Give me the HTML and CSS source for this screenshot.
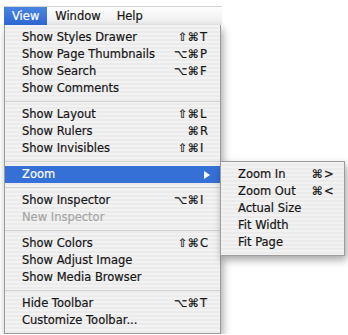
FILE: index.html
```html
<!DOCTYPE html>
<html lang="en">
<head>
    <meta charset="UTF-8">
    <title>View Menu</title>
    <link rel="stylesheet" href="styles.css">
</head>
<body>

    <div class="screen">
        <!-- Menu bar -->
        <div class="menubar">
            <span class="menubar-item is-open">View</span>
            <span class="menubar-item">Window</span>
            <span class="menubar-item">Help</span>
        </div>

        <!-- View dropdown -->
        <ul class="menu">
            <li class="menu-item"><span class="label">Show Styles Drawer</span><span class="mods">⇧⌘</span><span class="key">T</span></li>
            <li class="menu-item"><span class="label">Show Page Thumbnails</span><span class="mods">⌥⌘</span><span class="key">P</span></li>
            <li class="menu-item"><span class="label">Show Search</span><span class="mods">⌥⌘</span><span class="key">F</span></li>
            <li class="menu-item"><span class="label">Show Comments</span></li>
            <li class="separator"></li>
            <li class="menu-item"><span class="label">Show Layout</span><span class="mods">⇧⌘</span><span class="key">L</span></li>
            <li class="menu-item"><span class="label">Show Rulers</span><span class="mods">⌘</span><span class="key">R</span></li>
            <li class="menu-item"><span class="label">Show Invisibles</span><span class="mods">⇧⌘</span><span class="key">I</span></li>
            <li class="separator"></li>
            <li class="menu-item is-active">
                <span class="label">Zoom</span><span class="key"><span class="arrow"></span></span>

                <!-- Zoom submenu -->
                <ul class="menu submenu">
                    <li class="menu-item"><span class="label">Zoom In</span><span class="mods">⌘</span><span class="key">&gt;</span></li>
                    <li class="menu-item"><span class="label">Zoom Out</span><span class="mods">⌘</span><span class="key">&lt;</span></li>
                    <li class="menu-item"><span class="label">Actual Size</span></li>
                    <li class="menu-item"><span class="label">Fit Width</span></li>
                    <li class="menu-item"><span class="label">Fit Page</span></li>
                </ul>
            </li>
            <li class="separator"></li>
            <li class="menu-item"><span class="label">Show Inspector</span><span class="mods">⌥⌘</span><span class="key">I</span></li>
            <li class="menu-item is-disabled"><span class="label">New Inspector</span></li>
            <li class="separator"></li>
            <li class="menu-item"><span class="label">Show Colors</span><span class="mods">⇧⌘</span><span class="key">C</span></li>
            <li class="menu-item"><span class="label">Show Adjust Image</span></li>
            <li class="menu-item"><span class="label">Show Media Browser</span></li>
            <li class="separator"></li>
            <li class="menu-item"><span class="label">Hide Toolbar</span><span class="mods">⌥⌘</span><span class="key">T</span></li>
            <li class="menu-item"><span class="label">Customize Toolbar...</span></li>
        </ul>
    </div>

</body>
</html>
```

FILE: styles.css
```css
* {
    margin: 0;
    padding: 0;
    box-sizing: border-box;
}

:root {
    --highlight: #3470d6;
    --menu-border: #9c9c9c;
    --text: #161616;
    --disabled: #a6a6a6;
    --row-height: 17px;
}

body {
    font-family: "DejaVu Sans", sans-serif;
    font-size: 11.5px;
    color: var(--text);
    background-color: #ffffff;
    -webkit-text-stroke: 0.2px currentColor;
}

.screen {
    padding: 6px 0 0 4px;
}

/* Menu bar */
.menubar {
    display: flex;
    width: 218px;
    height: 19px;
    border-top: 1px solid #d4d4d4;
    background: linear-gradient(#fefefe, #ececec);
}

.menubar-item {
    padding: 0 8px;
    line-height: 18px;
}

.menubar-item.is-open {
    color: #ffffff;
    background: linear-gradient(#4a84e0, #2c66d2);
}

/* Dropdown menus */
.menu {
    list-style: none;
    width: 217px;
    padding: 4px 0;
    border: 1px solid var(--menu-border);
    border-top: none;
    background: repeating-linear-gradient(#f2f2f2 0, #f2f2f2 2px, #ebebeb 2px, #ebebeb 4px);
    box-shadow: 2px 4px 8px rgba(0, 0, 0, 0.35);
}

.menu-item {
    position: relative;
    display: flex;
    align-items: center;
    height: var(--row-height);
    line-height: var(--row-height);
    padding: 0 10px 0 17px;
    white-space: nowrap;
}

.menu-item .label {
    flex: 1;
}

.menu-item .mods {
    text-align: right;
}

.menu-item .key {
    display: flex;
    align-items: center;
    justify-content: flex-start;
    width: 10px;
    margin-left: 1px;
}

.menu-item.is-active {
    color: #ffffff;
    background-color: var(--highlight);
}

.menu-item.is-active > .key {
    justify-content: flex-end;
}

.menu-item.is-disabled {
    color: var(--disabled);
}

.arrow {
    width: 0;
    height: 0;
    border-left: 6px solid #ffffff;
    border-top: 4px solid transparent;
    border-bottom: 4px solid transparent;
}

.separator {
    height: 9px;
    padding-top: 4px;
}

.separator::before {
    content: "";
    display: block;
    height: 1px;
    background-color: #d2d2d2;
}

/* Flyout submenu */
.submenu {
    position: absolute;
    top: -5px;
    left: 100%;
    width: 125px;
    border-top: 1px solid var(--menu-border);
    color: var(--text);
}
```
